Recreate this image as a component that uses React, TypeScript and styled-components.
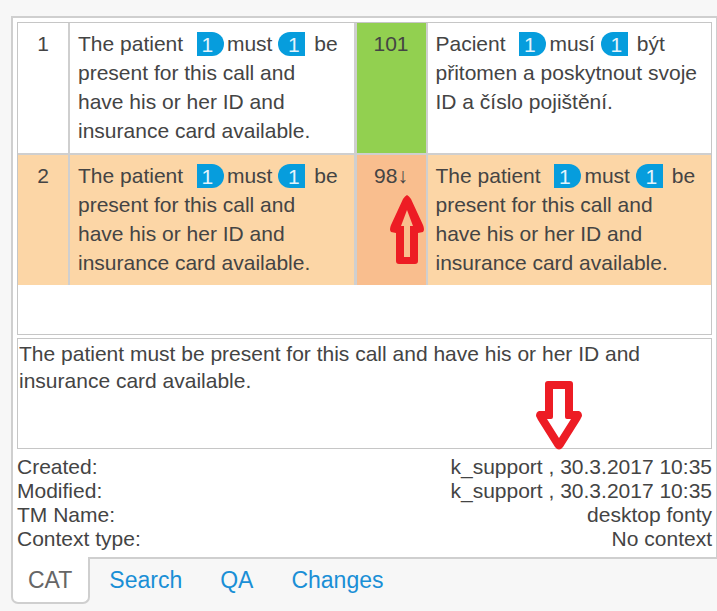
import React from "react";
import styled, { createGlobalStyle, css } from "styled-components";

const line = "#cfcfcf";

const GlobalStyle = createGlobalStyle`
  * { box-sizing: border-box; }
  body {
    margin: 0;
    background: #f7f7f7;
    color: #444;
    font-family: "Liberation Sans", Arial, sans-serif;
    font-size: 21px;
  }
`;

const Page = styled.main`
  padding: 16px 0 4px 11px;
`;

const Panel = styled.section`
  display: flex;
  flex-direction: column;
  padding: 4px 4px 6px;
  background: #fff;
  border: 2px solid ${line};
  border-right-width: 1px;
  border-bottom: 0;
`;

const ResultsBox = styled.div`
  min-height: 313px;
  margin-bottom: 3px;
  border: 1px solid #c6c6c6;
`;

const Results = styled.table`
  width: 100%;
  border-collapse: separate;
  border-spacing: 0;
  table-layout: fixed;
  line-height: 29px;
`;

const NumberCol = styled.col`
  width: 52px;
`;
const ScoreCol = styled.col`
  width: 74px;
`;

const Row = styled.tr<{ $selected?: boolean }>`
  background: ${(p) => (p.$selected ? "#fcd6a6" : "#fff")};
  &:not(:last-child) > * {
    border-bottom: 2px solid ${line};
  }
`;

const cell = css`
  padding: 6px 8px 8px;
  vertical-align: top;
  font-weight: normal;
`;

const NumberCell = styled.th`
  ${cell}
  text-align: center;
  border-right: 2px solid ${line};
`;

const TextCell = styled.td`
  ${cell}
  padding-right: 12px;
`;

const ScoreCell = styled.td<{ $color: string }>`
  ${cell}
  position: relative;
  text-align: center;
  padding-left: 0;
  padding-right: 0;
  background: ${(p) => p.$color};
  background-clip: padding-box;
  border-left: 3px solid ${line};
  border-right: 2px solid ${line};
`;

const Tag = styled.span<{ $side: "open" | "close" }>`
  display: inline-block;
  width: 27px;
  height: 24px;
  line-height: 25px;
  text-align: center;
  vertical-align: top;
  margin-top: 3px;
  color: #e4f4fc;
  background: #069ddd;
  ${(p) =>
    p.$side === "open"
      ? "margin-left: 8px; margin-right: 3px; padding-right: 6px; border-radius: 0 12px 12px 0;"
      : "margin-left: 6px; margin-right: 3px; padding-left: 4px; border-radius: 12px 0 0 12px;"}
`;

const UpArrow = styled.svg`
  position: absolute;
  left: 33px;
  top: 40px;
  width: 34px;
  height: 70px;
`;

const DownArrow = styled.svg`
  position: absolute;
  right: 129px;
  top: 42px;
  width: 46px;
  height: 69px;
`;

const Preview = styled.div`
  position: relative;
  min-height: 111px;
  padding: 1px;
  line-height: 27px;
  border: 1px solid #c6c6c6;
`;

const Details = styled.dl`
  display: grid;
  grid-template-columns: auto 1fr;
  margin: 6px 0 0;
  line-height: 24px;
`;

const Term = styled.dt``;

const Value = styled.dd`
  margin: 0;
  text-align: right;
`;

const Tabs = styled.nav`
  display: flex;
  font-size: 23px;
  line-height: 28px;
  &::after {
    content: "";
    flex: 1;
    border-top: 2px solid ${line};
  }
`;

const Tab = styled.a<{ $active?: boolean }>`
  padding: 7px 19px 10px;
  color: #1a8fd6;
  text-decoration: none;
  border-top: 2px solid ${line};
  ${(p) =>
    p.$active &&
    css`
      padding: 9px 16px 8px 15px;
      color: #666;
      background: #fff;
      border: 2px solid ${line};
      border-top: 0;
      border-radius: 0 0 7px 7px;
    `}
`;

const TaggedText = ({ before, inner, after }: { before: string; inner: string; after: string }) => (
  <TextCell>
    {before} <Tag $side="open">1</Tag>
    {inner}
    <Tag $side="close">1</Tag> {after}
  </TextCell>
);

const english = {
  before: "The patient",
  inner: "must",
  after: "be present for this call and have his or her ID and insurance card available.",
};

const details = [
  ["Created:", "k_support , 30.3.2017 10:35"],
  ["Modified:", "k_support , 30.3.2017 10:35"],
  ["TM Name:", "desktop fonty"],
  ["Context type:", "No context"],
];

export default function App() {
  return (
    <>
      <GlobalStyle />
      <Page>
        <Panel>
          <ResultsBox>
            <Results>
              <colgroup>
                <NumberCol />
                <col />
                <ScoreCol />
                <col />
              </colgroup>
              <tbody>
                <Row>
                  <NumberCell scope="row">1</NumberCell>
                  <TaggedText {...english} />
                  <ScoreCell $color="#92d050">101</ScoreCell>
                  <TaggedText
                    before="Pacient"
                    inner="musí"
                    after="být přitomen a poskytnout svoje ID a číslo pojištění."
                  />
                </Row>
                <Row $selected>
                  <NumberCell scope="row">2</NumberCell>
                  <TaggedText {...english} />
                  <ScoreCell $color="#f9be8e">
                    98↓
                    <UpArrow viewBox="0 0 34 70" aria-hidden="true">
                      <path
                        fill="#ed1c24"
                        fillRule="evenodd"
                        d="M17 0 Q19 1 21 4 L33 30 Q35 35 33 37 L28 38 V66 Q28 69 25 69 H9 Q6 69 6 66 V38 L1 37 Q-1 35 1 30 L13 4 Q15 1 17 0Z M17 15 L11 31 H14 V62 H20 V31 H23Z"
                      />
                    </UpArrow>
                  </ScoreCell>
                  <TaggedText {...english} />
                </Row>
              </tbody>
            </Results>
          </ResultsBox>
          <Preview>
            The patient must be present for this call and have his or her ID and insurance card
            available.
            <DownArrow viewBox="0 0 46 69" aria-hidden="true">
              <path
                fill="#ed1c24"
                fillRule="evenodd"
                d="M12 0 H34 Q37 0 37 3 V30 H43 Q46 31 46 35 L44 39 L27 66 Q23 71 19 66 L2 39 L0 35 Q0 31 3 30 H9 V3 Q9 0 12 0Z M17 8 V36 Q17 38 15 38 H11 L23 57 L35 38 H31 Q29 38 29 36 V8Z"
              />
            </DownArrow>
          </Preview>
          <Details>
            {details.map(([term, value], index) => (
              <React.Fragment key={index}>
                <Term>{term}</Term>
                <Value>{value}</Value>
              </React.Fragment>
            ))}
          </Details>
        </Panel>
        <Tabs>
          <Tab href="#cat" $active aria-current="page">
            CAT
          </Tab>
          <Tab href="#search">Search</Tab>
          <Tab href="#qa">QA</Tab>
          <Tab href="#changes">Changes</Tab>
        </Tabs>
      </Page>
    </>
  );
}
